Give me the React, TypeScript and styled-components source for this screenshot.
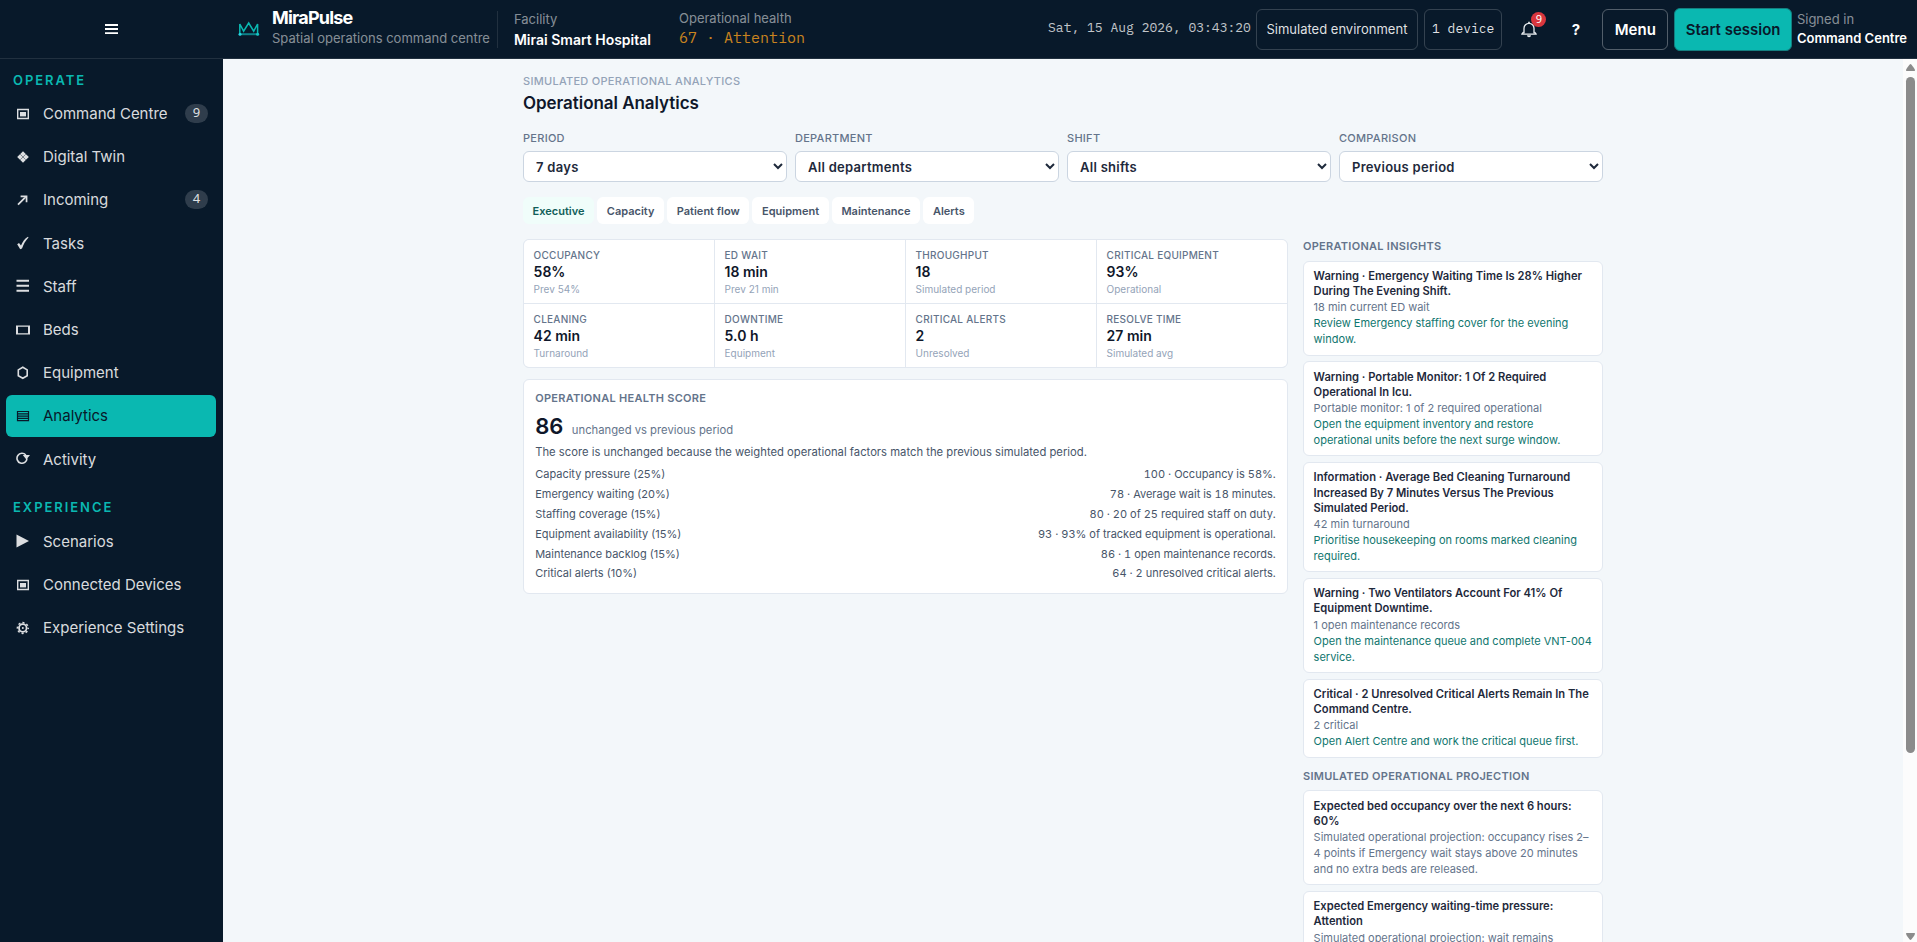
import React from "react";
import styled, { createGlobalStyle, css } from "styled-components";

const GlobalStyle = createGlobalStyle`
  *, *::before, *::after { box-sizing: border-box; }
  html, body, #root { height: 100%; }
  body {
    margin: 0;
    overflow: hidden;
    font-family: Inter, "Liberation Sans", sans-serif;
    background: #f3f7fa;
    color: #0f172a;
  }
  h1, h2, h3, p, ul, dl, dt, dd { margin: 0; padding: 0; font-weight: inherit; }
  ul { list-style: none; }
  button { font-family: inherit; margin: 0; }
`;

const navy = "#08192a";
const teal = "#0ab8b1";
const mono = css`font-family: "IBM Plex Mono", "Liberation Mono", monospace;`;

const Shell = styled.div`
  display: grid;
  grid-template: 59px minmax(0, 1fr) / 223px minmax(0, 1fr);
  height: 100vh;
  overflow: hidden;
`;

/* ---------- top bar ---------- */

const TopBar = styled.header`
  grid-column: 1 / -1;
  display: grid;
  grid-template-columns: 223px minmax(0, 1fr);
  background: ${navy};
  border-bottom: 1px solid #21303f;
  color: #fff;
`;

const MenuToggle = styled.button`
  display: grid;
  place-items: center;
  border: 0;
  background: none;
  color: #fff;
  padding: 0;
`;

const TopContent = styled.div`
  display: flex;
  align-items: center;
  padding: 0 10px 0 15px;
`;

const Brand = styled.div`
  display: flex;
  align-items: center;
  gap: 12px;
  padding-right: 7px;
`;

const BrandText = styled.div`
  padding-bottom: 3px;
`;

const BrandName = styled.div`
  font-size: 18px;
  font-weight: 700;
  line-height: 21px;
  letter-spacing: -0.045em;
`;

const Muted = styled.div`
  font-size: 13px;
  line-height: 20px;
  color: rgba(255, 255, 255, 0.52);
  white-space: nowrap;
`;

const Facility = styled.div`
  height: 37px;
  margin-right: 28px;
  padding-left: 16px;
  border-left: 1px solid #21303f;
  display: flex;
  flex-direction: column;
  justify-content: center;
  ${Muted} { padding-bottom: 1px; }
`;

const Health = styled.div`
  padding-bottom: 3px;
`;

const Strong = styled.div<{ $size: number }>`
  font-size: ${(p) => p.$size}px;
  line-height: 20px;
  font-weight: 600;
  white-space: nowrap;
`;

const HealthValue = styled.div`
  ${mono}
  font-size: 15px;
  line-height: 20px;
  color: #c9841f;
  white-space: pre;
`;

const Actions = styled.div`
  display: flex;
  align-items: center;
  gap: 6px;
  margin-left: auto;
`;

const Clock = styled.time`
  ${mono}
  font-size: 13px;
  color: rgba(255, 255, 255, 0.75);
  white-space: nowrap;
  margin: 0 -1px 3px 0;
`;

const StatusPill = styled.span<{ $mono?: boolean }>`
  display: inline-flex;
  align-items: center;
  height: 41px;
  padding: ${(p) => (p.$mono ? "0 7px 2px" : "0 9.6px")};
  border: 1px solid rgba(255, 255, 255, 0.18);
  border-radius: 6px;
  font-size: 13px;
  color: rgba(255, 255, 255, 0.88);
  white-space: nowrap;
  ${(p) => p.$mono && mono}
`;

const IconButton = styled.button`
  position: relative;
  display: grid;
  place-items: center;
  width: 41px;
  height: 41px;
  padding: 0;
  border: 0;
  background: none;
  color: #fff;
  font-size: 15px;
  font-weight: 700;
`;

const AlertCount = styled.span`
  position: absolute;
  top: 3px;
  right: 3px;
  width: 15px;
  height: 15px;
  border-radius: 50%;
  background: #d9363e;
  font-family: "Noto Sans", sans-serif;
  font-size: 11px;
  font-weight: 400;
  line-height: 14px;
  text-align: center;
`;

const BarButton = styled.button<{ $primary?: boolean }>`
  height: ${(p) => (p.$primary ? 43 : 41)}px;
  padding: 0 ${(p) => (p.$primary ? 10.4 : 11.4)}px;
  border: 1px solid ${(p) => (p.$primary ? "#137f80" : "rgba(255,255,255,.3)")};
  border-radius: 6px;
  background: ${(p) => (p.$primary ? teal : "transparent")};
  color: ${(p) => (p.$primary ? navy : "#fff")};
  font-size: 15px;
  font-weight: 600;
  white-space: nowrap;
`;

const Account = styled.div`
  margin-left: -1px;
  ${Muted} { line-height: 19px; }
  ${Strong} { line-height: 19px; }
`;

/* ---------- sidebar ---------- */

const Sidebar = styled.nav`
  background: ${navy};
  padding: 10.5px 7px 0 6px;
`;

const NavHeading = styled.h2`
  padding-left: 7px;
  margin-bottom: 3.5px;
  font-size: 13px;
  font-weight: 600;
  line-height: 20px;
  letter-spacing: 0.15em;
  color: ${teal};
`;

const NavList = styled.ul`
  display: flex;
  flex-direction: column;
  gap: 2px;
  margin-bottom: 17.6px;
`;

const NavItem = styled.li<{ $active?: boolean }>`
  display: flex;
  align-items: center;
  height: 41.2px;
  padding: 0 8px 0 10px;
  border-radius: 6px;
  font-size: 15px;
  color: ${(p) => (p.$active ? navy : "rgba(255,255,255,.86)")};
  background: ${(p) => (p.$active ? teal : "transparent")};
  svg { margin-right: 13px; flex: none; }
`;

const NavCount = styled.span`
  margin-left: auto;
  width: 23px;
  height: 19px;
  border-radius: 10px;
  background: rgba(255, 255, 255, 0.16);
  font-family: "Noto Sans", sans-serif;
  font-size: 13px;
  line-height: 17px;
  text-align: center;
`;

/* ---------- main ---------- */

const MainArea = styled.div`
  display: grid;
  grid-template-columns: minmax(0, 1fr) 14px;
  min-height: 0;
`;

const Main = styled.main`
  overflow: hidden;
`;

const Page = styled.div`
  width: 1080px;
  margin: 0 auto;
  padding-top: 14px;
`;

const Eyebrow = styled.p`
  font-size: 11px;
  font-weight: 500;
  line-height: 17px;
  letter-spacing: 0.025em;
  color: #94a3b8;
`;

const PageTitle = styled.h1`
  margin: 2px 0 16px;
  font-size: 17px;
  font-weight: 600;
  line-height: 22px;
  letter-spacing: -0.05px;
`;

const Filters = styled.div`
  display: grid;
  grid-template-columns: repeat(4, 1fr);
  gap: 8px;
`;

const Filter = styled.label`
  display: grid;
  gap: 5px;
  font-size: 11px;
  font-weight: 500;
  line-height: 16px;
  letter-spacing: 0.025em;
  color: #64748b;
`;

const Select = styled.select`
  width: 100%;
  height: 31px;
  padding: 0 8px;
  border: 1px solid #cbd5e1;
  border-radius: 6px;
  background: #fff;
  color: #1e293b;
  font: 600 13px Inter, sans-serif;
  letter-spacing: 0.28px;
`;

const Tabs = styled.div`
  display: flex;
  gap: 3.2px;
  margin: 15px 0;
`;

const Tab = styled.button<{ $active?: boolean }>`
  height: 27px;
  padding: 0 9.6px;
  border: 0;
  border-radius: 6px;
  background: ${(p) => (p.$active ? "#f0fdfa" : "#fff")};
  color: ${(p) => (p.$active ? "#115e59" : "#475569")};
  font-size: 11px;
  font-weight: 600;
`;

const Columns = styled.div`
  display: grid;
  grid-template-columns: minmax(0, 1fr) 300px;
  gap: 15px;
  align-items: start;
`;

const Stack = styled.div`
  display: flex;
  flex-direction: column;
  gap: 11.2px;
`;

const Metrics = styled.dl`
  display: grid;
  grid-template-columns: repeat(4, 1fr);
  gap: 1px;
  border: 1px solid #e2e8f0;
  border-radius: 6px;
  background: #e2e8f0;
  overflow: hidden;
`;

const Metric = styled.div`
  height: 63px;
  padding: 8px 9.6px 0;
  background: #fff;
`;

const MetricLabel = styled.dt`
  font-size: 10px;
  font-weight: 500;
  line-height: 15px;
  letter-spacing: 0.025em;
  color: #64748b;
`;

const MetricValue = styled.dd`
  font-size: 14px;
  font-weight: 600;
  line-height: 17px;
`;

const MetricNote = styled.dd`
  font-size: 10px;
  line-height: 18px;
  color: #94a3b8;
`;

const Card = styled.section`
  padding: 12px 11.2px 11.2px;
  border: 1px solid #e2e8f0;
  border-radius: 6px;
  background: #fff;
`;

const SectionTitle = styled.h2`
  font-size: 11px;
  font-weight: 600;
  line-height: 13.2px;
  letter-spacing: 0.025em;
  color: #64748b;
`;

const Score = styled.div`
  display: flex;
  align-items: baseline;
  gap: 8.5px;
  margin: 7.2px 0 5.2px;
  line-height: 26.4px;
`;

const ScoreValue = styled.span`
  font-size: 22px;
  font-weight: 600;
`;

const ScoreDelta = styled.span`
  font-size: 11.25px;
  line-height: 16px;
  color: #64748b;
`;

const Explanation = styled.p`
  font-size: 11.25px;
  line-height: 16.5px;
  color: #475569;
  margin-bottom: 5.8px;
`;

const Factors = styled.ul`
  display: grid;
  gap: 3.3px;
`;

const Factor = styled.li`
  display: flex;
  justify-content: space-between;
  font-size: 11px;
  line-height: 16.5px;
  color: #475569;
`;

const FactorDetail = styled.span`
  font-variant-numeric: tabular-nums;
`;

const Insights = styled(Stack)`
  padding-top: 1.2px;
`;

const Notes = styled.ul`
  display: flex;
  flex-direction: column;
  gap: 5.9px;
  margin-top: -3.9px;
`;

const ProjectionTitle = styled(SectionTitle)`
  margin-top: 1px;
`;

const Note = styled.li`
  padding: 7.3px 9.6px;
  border: 1px solid #e2e8f0;
  border-radius: 6px;
  background: #fff;
  font-size: 11px;
  line-height: 16px;
`;

const NoteTitle = styled.h3`
  font-size: 11.2px;
  font-weight: 600;
  line-height: 15.12px;
  color: #1e293b;
`;

const NoteText = styled.p<{ $action?: boolean }>`
  color: ${(p) => (p.$action ? "#0f766e" : "#64748b")};
`;

/* ---------- scrollbar ---------- */

const ScrollTrack = styled.div`
  display: flex;
  flex-direction: column;
  align-items: center;
  padding: 5px 0 2px 1px;
  background: #fcfcfc;
`;

const ScrollArrow = styled.svg`
  flex: none;
  display: block;
`;

const ScrollThumb = styled.div`
  width: 9px;
  height: 676px;
  margin: 6px 0 auto;
  border-radius: 5px;
  background: #8b8b8b;
`;

/* ---------- drawings ---------- */

const navIcons: Record<string, React.ReactNode> = {
  screen: (
    <>
      <path d="M1.7 2.500h10.600v9H1.700z" fill="none" stroke="currentColor" strokeWidth="1.400" />
      <path d="M4 5h6v4.400H4z" fill="currentColor" />
    </>
  ),
  twin: (
    <>
      <path d="M7 1.200 12.800 7 7 12.800 1.200 7z" fill="currentColor" />
      <path d="M4.200 4.200l5.600 5.600M9.800 4.200 4.200 9.800" stroke={navy} strokeOpacity=".55" strokeWidth=".8" />
    </>
  ),
  arrow: (
    <>
      <path d="M2 11.600 9 4.600" fill="none" stroke="currentColor" strokeWidth="1.700" />
      <path d="M4.600 2.400h6.800v6.800H9.700V5.200L8.700 4.200H4.600z" fill="currentColor" />
    </>
  ),
  check: (
    <path d="M1.2 8.2 3 7l2 2.6C6.700 5.500 8.800 2.700 12 .8l.5.6C9.500 4.500 7.500 8 6 12.600L4.200 13.300z" fill="currentColor" />
  ),
  list: <path d="M.5 1.800h12.500M.5 6.800h12.500M.5 11.800h12.500" stroke="currentColor" strokeWidth="2" />,
  bed: (
    <path d="M0 2.500h14v9H0zM2 3.700v6.600h10V3.700z" fill="currentColor" fillRule="evenodd" />
  ),
  hex: (
    <path d="M6.800 1.300 11.200 3.900v5.800L6.800 12.300 2.300 9.700V3.900z" fill="none" stroke="currentColor" strokeWidth="1.600" />
  ),
  rows: (
    <path d="M1.500 2.500h11v9.200h-11zM2 4.800h10M2 7.100h10M2 9.400h10" fill="none" stroke="currentColor" strokeWidth="1.200" />
  ),
  refresh: (
    <>
      <path d="M9.800 3A5 5 0 1 0 11 6.500" fill="none" stroke="currentColor" strokeWidth="1.600" />
      <path d="M6.800 3h7.200L10.300 7.500z" fill="currentColor" />
    </>
  ),
  play: <path d="M.5.500 13 7 .500 13.500z" fill="currentColor" />,
  gear: (
    <>
      <circle cx="6.800" cy="7" r="3.800" fill="none" stroke="currentColor" strokeWidth="1.800" />
      <circle cx="6.800" cy="7" r="1" fill="currentColor" />
      <circle cx="6.800" cy="7" r="5.400" fill="none" stroke="currentColor" strokeWidth="1.500" strokeDasharray="2.120 2.120" strokeDashoffset="1.060" />
    </>
  ),
};

const NavIcon = ({ name }: { name: string }) => (
  <svg width="14" height="14" viewBox="0 0 14 14">{navIcons[name]}</svg>
);

const Crown = () => (
  <svg width="22" height="16" viewBox="0 0 22 16" fill="none">
    <path d="M1.800 13V3l3.800 7.200L10.700 2l5 8.200L19.600 3v10" stroke={teal} strokeWidth="1.500" />
    <path d="M1.500 13.200h19" stroke="#0d8289" strokeWidth="2" />
    <circle cx="2" cy="13.200" r="1.500" fill="#25d3e0" />
    <circle cx="19.600" cy="13.200" r="1.500" fill="#14c4c4" />
  </svg>
);

const Bell = () => (
  <svg width="16" height="17" viewBox="0 0 16 17" fill="none">
    <path d="M3 12.500V7.300a5 5 0 0 1 10 0v5.200" stroke="#e9edf0" strokeWidth="1.300" />
    <path d="M2.600 11 .8 13.200h14.400L13.400 11" stroke="#e9edf0" strokeWidth="1.300" strokeLinejoin="round" />
    <path d="M8 .700v1.700" stroke="#e9edf0" strokeWidth="1.600" />
    <path d="M6 14.200h4a2 2 0 0 1-4 0z" fill="#e9edf0" />
  </svg>
);

/* ---------- data ---------- */

type Item = { icon: string; label: string; count?: number; active?: boolean };

const operate: Item[] = [
  { icon: "screen", label: "Command Centre", count: 9 },
  { icon: "twin", label: "Digital Twin" },
  { icon: "arrow", label: "Incoming", count: 4 },
  { icon: "check", label: "Tasks" },
  { icon: "list", label: "Staff" },
  { icon: "bed", label: "Beds" },
  { icon: "hex", label: "Equipment" },
  { icon: "rows", label: "Analytics", active: true },
  { icon: "refresh", label: "Activity" },
];

const experience: Item[] = [
  { icon: "play", label: "Scenarios" },
  { icon: "screen", label: "Connected Devices" },
  { icon: "gear", label: "Experience Settings" },
];

const filters = [
  ["PERIOD", "7 days"],
  ["DEPARTMENT", "All departments"],
  ["SHIFT", "All shifts"],
  ["COMPARISON", "Previous period"],
];

const tabs = ["Executive", "Capacity", "Patient flow", "Equipment", "Maintenance", "Alerts"];

const metrics = [
  ["OCCUPANCY", "58%", "Prev 54%"],
  ["ED WAIT", "18 min", "Prev 21 min"],
  ["THROUGHPUT", "18", "Simulated period"],
  ["CRITICAL EQUIPMENT", "93%", "Operational"],
  ["CLEANING", "42 min", "Turnaround"],
  ["DOWNTIME", "5.0 h", "Equipment"],
  ["CRITICAL ALERTS", "2", "Unresolved"],
  ["RESOLVE TIME", "27 min", "Simulated avg"],
];

const factors = [
  ["Capacity pressure (25%)", "100 · Occupancy is 58%."],
  ["Emergency waiting (20%)", "78 · Average wait is 18 minutes."],
  ["Staffing coverage (15%)", "80 · 20 of 25 required staff on duty."],
  ["Equipment availability (15%)", "93 · 93% of tracked equipment is operational."],
  ["Maintenance backlog (15%)", "86 · 1 open maintenance records."],
  ["Critical alerts (10%)", "64 · 2 unresolved critical alerts."],
];

const insights = [
  ["Warning · Emergency Waiting Time Is 28% Higher During The Evening Shift.", "18 min current ED wait", "Review Emergency staffing cover for the evening window."],
  ["Warning · Portable Monitor: 1 Of 2 Required Operational In Icu.", "Portable monitor: 1 of 2 required operational", "Open the equipment inventory and restore operational units before the next surge window."],
  ["Information · Average Bed Cleaning Turnaround Increased By 7 Minutes Versus The Previous Simulated Period.", "42 min turnaround", "Prioritise housekeeping on rooms marked cleaning required."],
  ["Warning · Two Ventilators Account For 41% Of Equipment Downtime.", "1 open maintenance records", "Open the maintenance queue and complete VNT-004 service."],
  ["Critical · 2 Unresolved Critical Alerts Remain In The Command Centre.", "2 critical", "Open Alert Centre and work the critical queue first."],
];

const projections = [
  ["Expected bed occupancy over the next 6 hours: 60%", "Simulated operational projection: occupancy rises 2–4 points if Emergency wait stays above 20 minutes and no extra beds are released."],
  ["Expected Emergency waiting-time pressure: Attention", "Simulated operational projection: wait remains"],
];

const NavSection = ({ title, items }: { title: string; items: Item[] }) => (
  <>
    <NavHeading>{title}</NavHeading>
    <NavList>
      {items.map((i) => (
        <NavItem key={i.label} $active={i.active}>
          <NavIcon name={i.icon} />
          {i.label}
          {i.count && <NavCount>{i.count}</NavCount>}
        </NavItem>
      ))}
    </NavList>
  </>
);

export default function App() {
  return (
    <Shell>
      <GlobalStyle />
      <TopBar>
        <MenuToggle aria-label="Toggle navigation">
          <svg width="13" height="12" viewBox="0 0 13 12">
            <path d="M0 2h13M0 6h13M0 10.200h13" stroke="currentColor" strokeWidth="1.800" />
          </svg>
        </MenuToggle>
        <TopContent>
          <Brand>
            <Crown />
            <BrandText>
              <BrandName>MiraPulse</BrandName>
              <Muted>Spatial operations command centre</Muted>
            </BrandText>
          </Brand>
          <Facility>
            <Muted>Facility</Muted>
            <Strong $size={14}>Mirai Smart Hospital</Strong>
          </Facility>
          <Health>
            <Muted>Operational health</Muted>
            <HealthValue>67 · Attention</HealthValue>
          </Health>
          <Actions>
            <Clock>Sat, 15 Aug 2026, 03:43:20</Clock>
            <StatusPill>Simulated environment</StatusPill>
            <StatusPill $mono>1 device</StatusPill>
            <IconButton aria-label="Alerts">
              <Bell />
              <AlertCount>9</AlertCount>
            </IconButton>
            <IconButton aria-label="Help">?</IconButton>
            <BarButton>Menu</BarButton>
            <BarButton $primary>Start session</BarButton>
            <Account>
              <Muted>Signed in</Muted>
              <Strong $size={13}>Command Centre</Strong>
            </Account>
          </Actions>
        </TopContent>
      </TopBar>

      <Sidebar>
        <NavSection title="OPERATE" items={operate} />
        <NavSection title="EXPERIENCE" items={experience} />
      </Sidebar>

      <MainArea>
        <Main>
          <Page>
            <Eyebrow>SIMULATED OPERATIONAL ANALYTICS</Eyebrow>
            <PageTitle>Operational Analytics</PageTitle>
            <Filters>
              {filters.map(([label, value]) => (
                <Filter key={label}>
                  {label}
                  <Select defaultValue={value}>
                    <option>{value}</option>
                  </Select>
                </Filter>
              ))}
            </Filters>
            <Tabs>
              {tabs.map((t, i) => (
                <Tab key={t} $active={i === 0}>{t}</Tab>
              ))}
            </Tabs>
            <Columns>
              <Stack>
                <Metrics>
                  {metrics.map(([label, value, note]) => (
                    <Metric key={label}>
                      <MetricLabel>{label}</MetricLabel>
                      <MetricValue>{value}</MetricValue>
                      <MetricNote>{note}</MetricNote>
                    </Metric>
                  ))}
                </Metrics>
                <Card>
                  <SectionTitle>OPERATIONAL HEALTH SCORE</SectionTitle>
                  <Score>
                    <ScoreValue>86</ScoreValue>
                    <ScoreDelta>unchanged vs previous period</ScoreDelta>
                  </Score>
                  <Explanation>
                    The score is unchanged because the weighted operational factors match the previous simulated period.
                  </Explanation>
                  <Factors>
                    {factors.map(([name, detail]) => (
                      <Factor key={name}>
                        <span>{name}</span>
                        <FactorDetail>{detail}</FactorDetail>
                      </Factor>
                    ))}
                  </Factors>
                </Card>
              </Stack>
              <Insights>
                <SectionTitle>OPERATIONAL INSIGHTS</SectionTitle>
                <Notes>
                  {insights.map(([title, evidence, action]) => (
                    <Note key={title}>
                      <NoteTitle>{title}</NoteTitle>
                      <NoteText>{evidence}</NoteText>
                      <NoteText $action>{action}</NoteText>
                    </Note>
                  ))}
                </Notes>
                <ProjectionTitle>SIMULATED OPERATIONAL PROJECTION</ProjectionTitle>
                <Notes>
                  {projections.map(([title, text]) => (
                    <Note key={title}>
                      <NoteTitle>{title}</NoteTitle>
                      <NoteText>{text}</NoteText>
                    </Note>
                  ))}
                </Notes>
              </Insights>
            </Columns>
          </Page>
        </Main>
        <ScrollTrack>
          <ScrollArrow width="9" height="7" viewBox="0 0 9 7">
            <path d="M4.500 0C5.300 0 9 5 9 6.200 9 6.800 8.600 7 8 7H1C.4 7 0 6.800 0 6.200 0 5 3.700 0 4.500 0z" fill="#8b8b8b" />
          </ScrollArrow>
          <ScrollThumb />
          <ScrollArrow width="9" height="7" viewBox="0 0 9 7">
            <path d="M4.500 7C5.300 7 9 2 9 .8 9 .2 8.600 0 8 0H1C.4 0 0 .2 0 .8 0 2 3.700 7 4.500 7z" fill="#8b8b8b" />
          </ScrollArrow>
        </ScrollTrack>
      </MainArea>
    </Shell>
  );
}
